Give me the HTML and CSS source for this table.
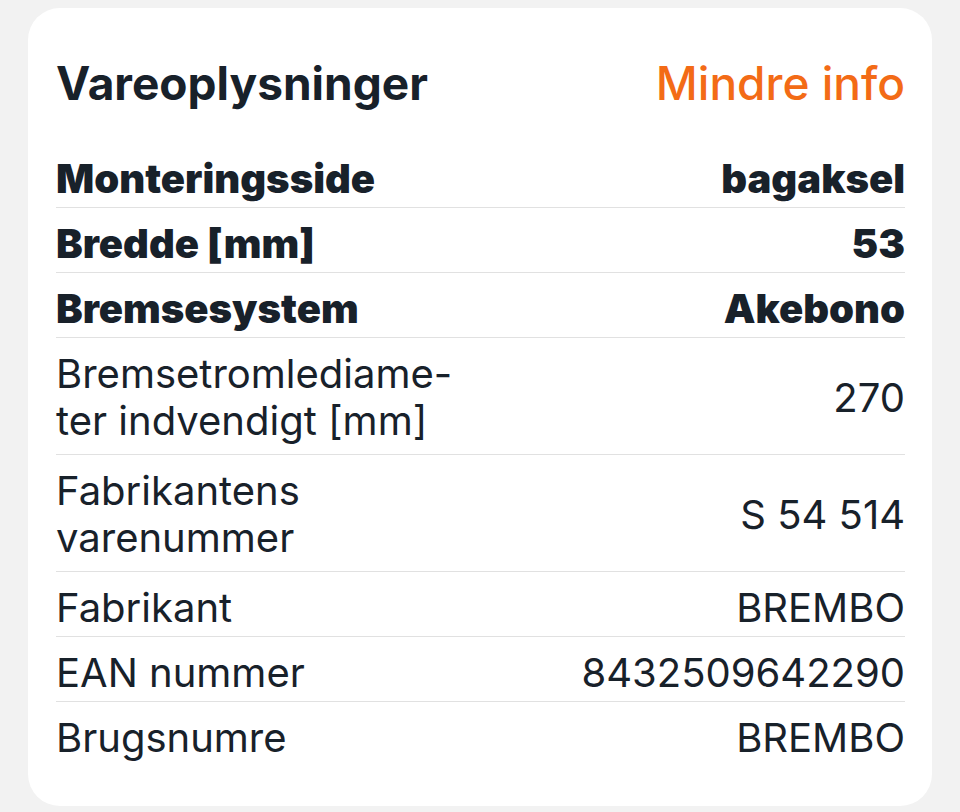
FILE: index.html
```html
<!DOCTYPE html>
<html lang="da">
<head>
<meta charset="utf-8">
<title>Vareoplysninger</title>
<link rel="stylesheet" href="styles.css">
</head>
<body>
<section class="card">
  <header class="card-header">
    <h2 class="title">Vareoplysninger</h2>
    <a class="toggle" href="#">Mindre info</a>
  </header>
  <dl class="specs">
    <div class="row row--strong"><dt>Monteringsside</dt><dd>bagaksel</dd></div>
    <div class="row row--strong"><dt>Bredde [mm]</dt><dd>53</dd></div>
    <div class="row row--strong"><dt>Bremsesystem</dt><dd>Akebono</dd></div>
    <div class="row row--tall"><dt>Bremsetromlediame-<br>ter indvendigt [mm]</dt><dd>270</dd></div>
    <div class="row row--tall"><dt>Fabrikantens<br>varenummer</dt><dd>S 54 514</dd></div>
    <div class="row"><dt>Fabrikant</dt><dd>BREMBO</dd></div>
    <div class="row"><dt>EAN nummer</dt><dd>8432509642290</dd></div>
    <div class="row row--last"><dt>Brugsnumre</dt><dd>BREMBO</dd></div>
  </dl>
</section>
</body>
</html>
```

FILE: styles.css
```css
html, body {
  margin: 0;
  padding: 0;
}

body {
  background: #f2f2f2;
  font-family: Inter, "Noto Sans", "Liberation Sans", sans-serif;
  color: #18212a;
  padding: 8px 28px 6px;
}

.card {
  background: #ffffff;
  border-radius: 32px;
  padding: 0 27px 40px 28px;
}

.card-header {
  display: flex;
  justify-content: space-between;
  align-items: center;
  padding: 50px 0 35px;
  line-height: 50px;
}

.title {
  margin: 0;
  font-size: 46px;
  font-weight: 700;
}

.toggle {
  color: #f36b16;
  font-size: 46px;
  font-weight: 500;
  text-decoration: none;
}

.specs {
  margin: 0;
}

.row {
  display: flex;
  justify-content: space-between;
  align-items: center;
  padding: 12px 0 5px;
  border-bottom: 1px solid #e1e1e1;
  font-size: 40px;
  line-height: 47px;
}

.row--tall {
  padding: 12px 0 10px;
}

.row--last {
  border-bottom: none;
}

.row dt,
.row dd {
  margin: 0;
}

.row dd {
  text-align: right;
}

.row--strong {
  font-weight: 900;
}
```
